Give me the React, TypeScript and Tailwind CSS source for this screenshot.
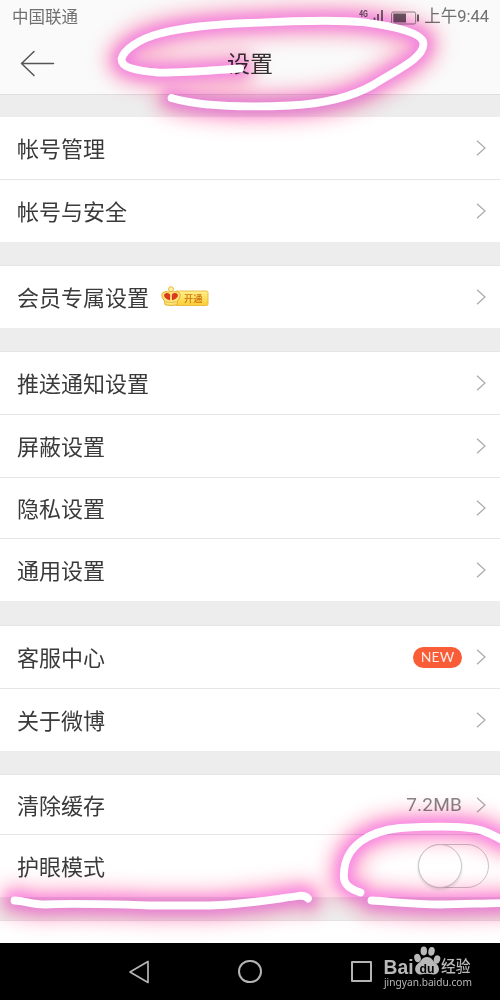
import React from 'react';

interface SettingItem {
  label: string;
  height: string;
  extra?: 'vip' | 'new' | 'size' | 'switch';
}

const groups: SettingItem[][] = [
  [
    { label: '帐号管理', height: 'h-[63px]' },
    { label: '帐号与安全', height: 'h-[62px]' },
  ],
  [{ label: '会员专属设置', height: 'h-[62px]', extra: 'vip' }],
  [
    { label: '推送通知设置', height: 'h-[63px]' },
    { label: '屏蔽设置', height: 'h-[63px]' },
    { label: '隐私设置', height: 'h-[61px]' },
    { label: '通用设置', height: 'h-[62px]' },
  ],
  [
    { label: '客服中心', height: 'h-[63px]', extra: 'new' },
    { label: '关于微博', height: 'h-[62px]' },
  ],
  [
    { label: '清除缓存', height: 'h-[60px]', extra: 'size' },
    { label: '护眼模式', height: 'h-[62px]', extra: 'switch' },
  ],
];

const gaps = ['h-[22px]', 'h-[24px]', 'h-[24px]', 'h-[25px]', 'h-[24px]'];

const strokes = [
  'M240 68.5C215 70 185 73 158 72.5C135 71 121 67 121.5 59C123 51 138 39 160 33.5C185 27 220 24 250 23C300 20.5 340 19.5 365 22.5C395 26.5 424 33 423.5 44C423 59 396 70 373 85C348 99 320 104 290 105.5C245 107.5 202 107 171.5 98',
  'M14.5 900.5C25 901 32 904.5 45 904.5C65 903 130 904.5 150 905.5L210 905.5C250 904 275 899 298 896Q305 895 308 898.5',
  'M360.5 892.5C346 888 343 882 344 873C345 846 369 831 400 828C425 826.5 465 825 482 830.5Q492 834 504 841',
  'M371.5 900.5C395 902 415 904.5 440 904.5C465 904.5 485 903 505 903',
];

function StatusBar() {
  return (
    <div className="flex h-[35px] items-center justify-between pl-3 pr-[11px] text-[#707070]">
      <span className="text-[16.5px] leading-none">中国联通</span>
      <div className="flex items-center">
        <svg className="mr-[7px] h-5 w-[26px]" viewBox="0 0 26 20">
          <text x="1" y="8.5" fontSize="9.5" fontWeight="700" fontFamily="Roboto, sans-serif" textLength="9" lengthAdjust="spacingAndGlyphs" fill="#666">4G</text>
          <path d="M13 13.5v-2M16.5 13.5V9.5M20 13.5V6M24 13.5V2" stroke="#666" strokeWidth="1.8" />
        </svg>
        <svg className="mr-[5px] h-[14px] w-7" viewBox="0 0 28 14">
          <rect x=".6" y="1" width="24" height="12" rx="1.5" fill="none" stroke="#888" strokeWidth="1" />
          <rect x="2.3" y="2.5" width="12.7" height="9" fill="#666" />
          <path d="M27 3.5v7" stroke="#666" strokeWidth="2" />
        </svg>
        <span className="font-[Roboto,'Noto_Sans_CJK_SC',sans-serif] text-[16.5px] leading-none">上午9:44</span>
      </div>
    </div>
  );
}

function Header() {
  return (
    <header className="h-[95px] border-b border-[#dedede] bg-[#fafafa]">
      <StatusBar />
      <div className="grid h-[57px] grid-cols-[1fr_auto_1fr] items-center px-5">
        <svg className="h-7 w-9" viewBox="0 0 36 28" fill="none" stroke="#555" strokeWidth="1.5" strokeLinecap="round" strokeLinejoin="round">
          <path d="M14 1.5L1.5 13.5L14 25.5M1.5 13.5H33.5" />
        </svg>
        <h1 className="text-[23px] leading-none text-[#333]">设置</h1>
      </div>
    </header>
  );
}

function Chevron() {
  return (
    <svg className="ml-[14px] h-4 w-[10px] shrink-0" viewBox="0 0 10 16" fill="none" stroke="#aaa" strokeWidth="1.2">
      <path d="M1 .8L9 8L1 15.2" />
    </svg>
  );
}

function VipBadge() {
  return (
    <svg className="ml-3 h-[22px] w-12" viewBox="0 0 48 22">
      <defs>
        <linearGradient id="gold" x1="0" y1="0" x2="0" y2="1">
          <stop offset="0" stopColor="#fff08c" />
          <stop offset="1" stopColor="#fbcf35" />
        </linearGradient>
      </defs>
      <rect x="14" y="5" width="33" height="14.5" rx="1.5" fill="url(#gold)" stroke="#e8b63a" strokeWidth=".9" />
      <path d="M4 18.8L3.5 15C1 12 .5 9.5 1 8C2 5.5 5 5.2 7.5 6L10 4.5L12.5 6C15 5.2 18 5.5 19 8C19.5 9.5 19 12 16.5 15L16 18.8Q10 20.2 4 18.8Z" fill="#ffe477" stroke="#e5ae31" />
      <circle cx="10" cy="3.2" r="2.5" fill="#fff3a8" stroke="#ebb63e" />
      <path d="M9 14.2C4.5 13.2 2.6 10.8 3.2 8.8C4.2 6 8.8 6.7 9.2 9.2ZM11 14.2C15.5 13.2 17.4 10.8 16.8 8.8C15.8 6 11.2 6.7 10.8 9.2Z" fill="#d93a20" />
      <path d="M4.5 15.8Q10 17.2 15.5 15.8" fill="none" stroke="#e5ae31" strokeWidth=".7" />
      <text x="23" y="15.7" fontSize="9.2" fontWeight="500" fill="#cf7010">开通</text>
    </svg>
  );
}

function Toggle() {
  return (
    <div className="-mr-[3px] h-[44px] w-[71px] rounded-full border border-[#c9c9c9] bg-white">
      <div className="-ml-px -mt-px h-[44px] w-[44px] rounded-full border border-[#c9c9c9] bg-white shadow-[0_2px_3px_rgba(0,0,0,0.12)]" />
    </div>
  );
}

function SettingRow({ item, last }: { item: SettingItem; last: boolean }) {
  return (
    <div className={`flex shrink-0 items-center bg-white pl-[17px] pr-[14px] ${item.height} ${last ? '' : 'border-b border-[#e6e6e6]'}`}>
      <span className="text-[22px] leading-none text-[#3a3a3a]">{item.label}</span>
      {item.extra === 'vip' && <VipBadge />}
      <div className="ml-auto flex items-center">
        {item.extra === 'new' && (
          <span className="flex h-[21px] w-[49px] items-center justify-center rounded-full bg-[#f95d37] font-[Lato,sans-serif] text-[14px] leading-none text-[#ffeae4]">
            NEW
          </span>
        )}
        {item.extra === 'size' && <span className="font-[Roboto,sans-serif] text-[19px] leading-none tracking-[0.2px] text-[#858585]">7.2MB</span>}
        {item.extra === 'switch' ? <Toggle /> : <Chevron />}
      </div>
    </div>
  );
}

function BaiduLogo() {
  return (
    <svg className="absolute left-[382px] top-0 h-[57px] w-[100px]" viewBox="0 0 100 57" fill="#b9b9b9">
      <text x="1.5" y="31" fontSize="20" fontWeight="700" fontFamily="Liberation Sans, sans-serif" textLength="30" lengthAdjust="spacingAndGlyphs">Bai</text>
      <ellipse cx="35.5" cy="15" rx="3.2" ry="4.2" transform="rotate(-18 35.5 15)" />
      <ellipse cx="41.8" cy="8" rx="3.2" ry="4.4" />
      <ellipse cx="49.5" cy="8.3" rx="3.2" ry="4.4" transform="rotate(10 49.5 8.3)" />
      <ellipse cx="55" cy="16.5" rx="3.2" ry="4.2" transform="rotate(18 55 16.5)" />
      <path d="M45 14C39.5 14 40 18 36 20.5C31 24.5 33 31.5 38.5 31.5Q45 30 51.5 31.5C57.5 31.5 59 24.5 54 20.5C50 18 50.5 14 45 14Z" />
      <text x="37.5" y="29.5" fontSize="12.5" fontWeight="700" fontFamily="Liberation Sans, sans-serif" fill="#000" textLength="15" lengthAdjust="spacingAndGlyphs">du</text>
      <text x="59" y="29" fontSize="15.5" fontWeight="500" textLength="29.5" lengthAdjust="spacingAndGlyphs">经验</text>
      <text x="2" y="43" fontSize="10" fontFamily="Noto Sans, sans-serif" textLength="88" lengthAdjust="spacingAndGlyphs">jingyan.baidu.com</text>
    </svg>
  );
}

function NavigationBar() {
  return (
    <nav className="relative flex h-[57px] shrink-0 items-center bg-black pl-[128px] text-[#b4b4b4]">
      <svg className="h-6 w-[22px]" viewBox="0 0 22 24" fill="none" stroke="currentColor" strokeWidth="1.7" strokeLinejoin="round">
        <path d="M2 12L20 1.5V22.5Z" />
      </svg>
      <div className="ml-[88px] h-[23px] w-[24px] rounded-full border-2 border-current" />
      <div className="ml-[89px] h-[21px] w-[21px] rounded-[1px] border-2 border-current" />
      <BaiduLogo />
    </nav>
  );
}

function NeonMarks() {
  return (
    <>
      <svg className="pointer-events-none absolute inset-0 mix-blend-multiply" width="500" height="943" viewBox="0 0 500 943" fill="none" strokeLinecap="round">
        <defs>
          <filter id="haze" filterUnits="userSpaceOnUse" x="-60" y="-60" width="620" height="1100" colorInterpolationFilters="sRGB">
            <feGaussianBlur stdDeviation="8.5" />
          </filter>
          <filter id="glow" filterUnits="userSpaceOnUse" x="-60" y="-60" width="620" height="1100" colorInterpolationFilters="sRGB">
            <feGaussianBlur stdDeviation="6" />
          </filter>
        </defs>
        <g filter="url(#haze)" stroke="#ffc2d8" strokeWidth="36">
          {strokes.map((d) => <path key={d} d={d} />)}
        </g>
        <g filter="url(#glow)" stroke="#f886e4" strokeWidth="17">
          {strokes.map((d) => <path key={d} d={d} />)}
        </g>
      </svg>
      <svg className="pointer-events-none absolute inset-0" width="500" height="943" viewBox="0 0 500 943" fill="none" stroke="white" strokeWidth="7.8" strokeLinecap="round" strokeLinejoin="round">
        {strokes.map((d) => <path key={d} d={d} />)}
      </svg>
    </>
  );
}

export default function App() {
  return (
    <div className="relative flex h-[1000px] w-[500px] flex-col overflow-hidden bg-[#ededed] font-['Noto_Sans','Noto_Sans_CJK_SC',sans-serif]">
      <Header />
      <main className="flex h-[848px] flex-col overflow-hidden">
        {groups.map((group, idx) => (
          <React.Fragment key={idx}>
            <div className={`shrink-0 ${gaps[idx]} ${idx === 0 ? '' : 'border-b border-[#e5e5e5]'}`} />
            <section>
              {group.map((item, i) => (
                <SettingRow key={item.label} item={item} last={i === group.length - 1} />
              ))}
            </section>
          </React.Fragment>
        ))}
        <div className="h-[24px] shrink-0 border-b border-[#e5e5e5]" />
        <div className="flex h-[22px] shrink-0 justify-center overflow-hidden bg-white pt-[21px] text-[22px] leading-none text-[#3a3a3a]">
          <span>退出微博</span>
        </div>
      </main>
      <NavigationBar />
      <NeonMarks />
    </div>
  );
}
